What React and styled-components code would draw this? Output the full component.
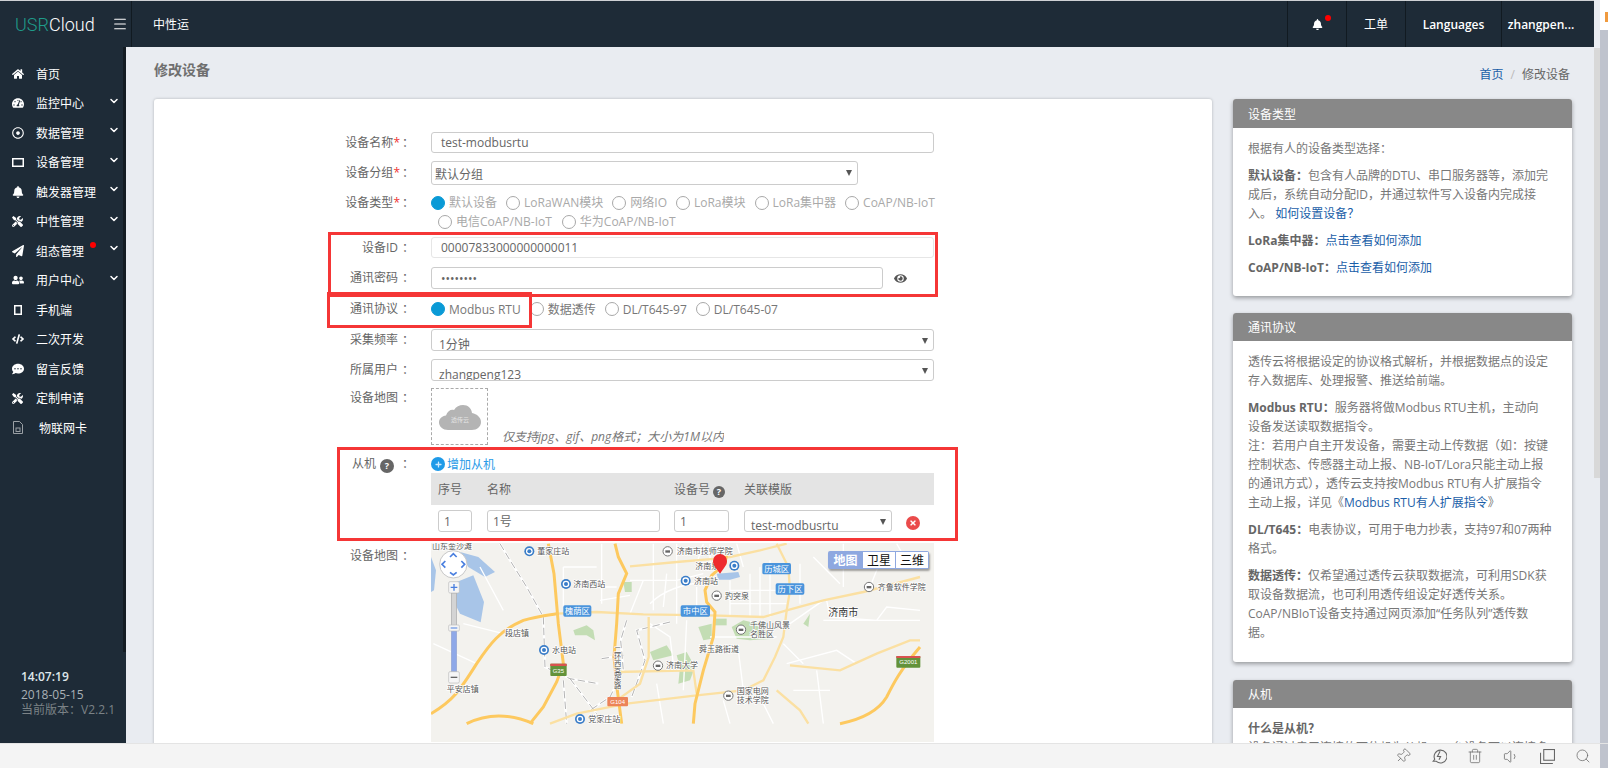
import React from "react";
import styled, { createGlobalStyle } from "styled-components";
import {
  FaHome,
  FaTachometerAlt,
  FaRegDotCircle,
  FaBell,
  FaTools,
  FaPaperPlane,
  FaUserFriends,
  FaCode,
  FaCommentDots,
  FaEye,
  FaTimes,
  FaPlus,
} from "react-icons/fa";
import { ChevronDown, Menu, Pin, Trash2, Volume1, Search } from "lucide-react";

const GlobalStyle = createGlobalStyle`
  html, body { margin: 0; padding: 0; height: 768px; overflow: hidden; background: #bfc3cd; }
  * { box-sizing: border-box; }
  body { font-family: "Open Sans", "Noto Sans CJK SC", sans-serif; font-size: 12px; color: #666; }
`;

const Page = styled.div`
  width: 1608px;
  height: 768px;
  display: flex;
  flex-direction: column;
`;

const Upper = styled.div`
  height: 743px;
  display: flex;
`;

const Shell = styled.div`
  width: 1594px;
  display: flex;
  flex-direction: column;
  border-top: 1px solid #cfd1d4;
`;

const ScrollTrack = styled.div`
  width: 6px;
  background: #e9ecf1;
`;

const ScrollThumb = styled.div`
  height: 430px;
  margin-top: 48px;
  background: #d8d8d8;
`;

const Strip = styled.div`
  width: 8px;
  background: #bfc3cd;
`;

const StripTop = styled.div`
  height: 30px;
  background: #fff;
  padding: 12px 0 0 5px;
`;

const StripMark = styled.div`
  width: 3px;
  height: 10px;
  background: #f09a3e;
`;

/* header */
const Header = styled.header`
  height: 46px;
  flex: none;
  display: flex;
  align-items: center;
  background: #1e2b37;
  color: #fff;
`;

const LogoBox = styled.div`
  width: 132px;
  height: 100%;
  display: flex;
  align-items: center;
  padding-left: 15px;
  border-right: 1px solid #111a21;
  svg { margin-left: 17px; }
`;

const Logo = styled.div`
  width: 80px;
  font-family: "Roboto", sans-serif;
  font-weight: 300;
  font-size: 18px;
  color: #fff;
  span { color: #1f9c8a; }
`;

const Brand = styled.div`
  margin-left: 21px;
  font-size: 12px;
  flex: 1;
`;

const HeadCell = styled.div`
  width: ${(p) => p.$w}px;
  height: 100%;
  display: flex;
  align-items: center;
  justify-content: center;
  border-left: 1px solid #111a21;
  padding-right: ${(p) => p.$pr || 0}px;
  font-size: 12px;
  font-weight: ${(p) => (p.$plain ? 400 : 600)};
  position: relative;
`;

const BellDot = styled.i`
  position: absolute;
  left: 37px;
  top: 14px;
  width: 6px;
  height: 6px;
  border-radius: 50%;
  background: #f00;
`;

/* body + sidebar */
const Body = styled.div`
  flex: 1;
  display: flex;
  min-height: 0;
`;

const Sidebar = styled.aside`
  width: 126px;
  flex: none;
  background: #1e2b37;
  color: #fff;
  display: flex;
  flex-direction: column;
  position: relative;
  &::after {
    content: "";
    position: absolute;
    left: 123px;
    top: 0;
    width: 3px;
    height: 605px;
    background: #141c23;
  }
`;

const Nav = styled.nav`
  padding-top: 12px;
`;

const NavItem = styled.div`
  height: 29.5px;
  display: flex;
  align-items: center;
  position: relative;
  padding-left: ${(p) => (p.$indent ? 39 : 36)}px;
  font-size: 12px;
`;

const NavIcon = styled.span`
  position: absolute;
  left: 11px;
  top: 0;
  width: 13px;
  height: 100%;
  display: flex;
  align-items: center;
  justify-content: center;
  svg { display: block; }
`;

const NavArrow = styled.span`
  position: absolute;
  left: 108px;
  top: 6px;
  svg { display: block; }
`;

const NavDot = styled.i`
  position: absolute;
  left: 90px;
  top: 6px;
  width: 6px;
  height: 6px;
  border-radius: 50%;
  background: #f00;
`;

const Clock = styled.div`
  margin-top: auto;
  padding: 0 0 26px 21px;
`;

const ClockTime = styled.div`
  font-size: 12px;
  line-height: 18px;
  font-weight: 600;
  color: #dfe6ea;
`;

const ClockDate = styled.div`
  font-size: 12px;
  line-height: 16px;
  margin-top: 1px;
  color: #aab1b6;
`;

const ClockVer = styled.div`
  font-size: 12px;
  line-height: 14px;
  color: #7b8286;
`;

/* content */
const Content = styled.main`
  flex: 1;
  min-width: 0;
  background: #e9ecf1;
  padding-left: 28px;
  overflow: hidden;
`;

const TitleBar = styled.div`
  height: 52px;
  display: flex;
  justify-content: space-between;
  padding-right: 24px;
`;

const Title = styled.h1`
  margin: 13px 0 0;
  font-size: 14px;
  line-height: 20px;
  font-weight: 700;
  color: #6f6f6f;
`;

const Crumbs = styled.div`
  margin-top: 19px;
  line-height: 18px;
  font-size: 12px;
  color: #666;
  a { color: #1a5ea8; }
  i { font-style: normal; color: #bbb; margin: 0 7px; }
`;

const Columns = styled.div`
  display: flex;
  gap: 21px;
`;

const Card = styled.section`
  width: 1058px;
  height: 680px;
  flex: none;
  background: #fff;
  border-radius: 3px 3px 0 0;
  box-shadow: 0 0 3px rgba(0, 0, 0, 0.25);
  padding-top: 33px;
  position: relative;
`;

const Annotation = styled.div`
  position: absolute;
  left: ${(p) => p.$l}px;
  top: ${(p) => p.$t}px;
  width: ${(p) => p.$w}px;
  height: ${(p) => p.$h}px;
  border: 3px solid #f53636;
  pointer-events: none;
`;

const Row = styled.div`
  display: flex;
  align-items: ${(p) => (p.$top ? "flex-start" : "center")};
  margin-top: ${(p) => p.$mt || 0}px;
  min-height: ${(p) => p.$h || 0}px;
`;

const Label = styled.label`
  width: 260px;
  flex: none;
  text-align: right;
  margin: ${(p) => p.$mt || 0}px 17px 0 0;
  font-size: 12px;
  line-height: 16px;
  color: #666;
  b { color: #e33; font-weight: 400; margin-right: 2px; }
`;

const Colon = styled.span`
  margin-left: 4px;
`;

const Input = styled.div`
  width: ${(p) => p.$w}px;
  height: ${(p) => p.$h}px;
  flex: none;
  border: 1px solid ${(p) => (p.$soft ? "#e6e6e6" : "#ccc")};
  border-radius: 3px;
  padding-left: ${(p) => p.$pl ?? 9}px;
  display: flex;
  align-items: center;
  font-size: 12px;
  color: #666;
  background: #fff;
`;

const Select = styled.div`
  width: ${(p) => p.$w}px;
  height: ${(p) => p.$h}px;
  flex: none;
  border: 1px solid #ccc;
  border-radius: 3px;
  padding: ${(p) => p.$pt ?? 6}px 0 0 ${(p) => p.$pl ?? 7}px;
  font-size: 12px;
  line-height: 18px;
  color: #666;
  background: #fff;
  overflow: hidden;
  position: relative;
  &::after {
    content: "";
    position: absolute;
    right: 5px;
    top: 8px;
    border-left: 3.5px solid transparent;
    border-right: 3.5px solid transparent;
    border-top: 6px solid #555;
  }
`;

const Radios = styled.div`
  display: flex;
  align-items: center;
  white-space: nowrap;
  padding-left: ${(p) => p.$pl || 0}px;
  gap: ${(p) => p.$gap || 7}px;
`;

const Radio = styled.span`
  display: inline-flex;
  align-items: center;
  gap: 4px;
  font-size: 12px;
  line-height: 19px;
  color: ${(p) => (p.$off ? "#a9a9a9" : "#777")};
  &::before {
    content: "";
    width: 12px;
    height: 12px;
    border-radius: 50%;
    border: 1px solid ${(p) => (p.$on ? "#0a9ad6" : "#a8a8a8")};
    background: ${(p) => (p.$on ? "#0a9ad6" : "#fff")};
  }
`;

const Eye = styled.span`
  margin-left: 11px;
  color: #555;
  svg { display: block; }
`;

const Upload = styled.div`
  width: 57px;
  height: 57px;
  flex: none;
  border: 1px dashed #aaa;
  display: flex;
  align-items: center;
  justify-content: center;
  padding-top: 2px;
`;

const Hint = styled.em`
  margin: 40px 0 0 14px;
  height: 17px;
  font-size: 12px;
  line-height: 18px;
  color: #777;
  overflow: hidden;
`;

const Help = styled.i`
  display: inline-flex;
  align-items: center;
  justify-content: center;
  width: ${(p) => p.$size || 12}px;
  height: ${(p) => p.$size || 12}px;
  margin: 0 ${(p) => p.$mr || 0}px 0 ${(p) => p.$ml || 0}px;
  border-radius: 50%;
  background: #666;
  color: #fff;
  font-size: 9px;
  font-style: normal;
  font-weight: 700;
  vertical-align: -1px;
`;

const SlaveBox = styled.div`
  width: 503px;
  flex: none;
`;

const AddSlave = styled.div`
  height: 18px;
  display: flex;
  align-items: center;
  gap: 2px;
  font-size: 12px;
  color: #2a9be8;
`;

const PlusDot = styled.span`
  width: 14px;
  height: 14px;
  border-radius: 50%;
  background: #1f9ae8;
  color: #cfeaff;
  display: flex;
  align-items: center;
  justify-content: center;
`;

const TableGrid = styled.div`
  display: grid;
  grid-template-columns: 49px 187px 70px 162px 1fr;
  padding-left: 7px;
  align-items: center;
`;

const TableHead = styled(TableGrid)`
  height: 32px;
  background: #e4e4e4;
  font-size: 12px;
  color: #666;
`;

const TableRow = styled(TableGrid)`
  height: 38px;
  padding-top: 5px;
  align-items: flex-start;
`;

const Remove = styled.span`
  width: 14px;
  height: 14px;
  margin-top: 6px;
  border-radius: 50%;
  background: #ea4b4b;
  color: #fff;
  display: flex;
  align-items: center;
  justify-content: center;
`;

const MapFrame = styled.div`
  width: 503px;
  height: 199px;
  flex: none;
  position: relative;
  overflow: hidden;
  background: #f3f2ee;
  svg { display: block; }
`;

const MapTypes = styled.div`
  position: absolute;
  left: 397px;
  top: 8px;
  display: flex;
  height: 18px;
  background: #8ea8e0;
  box-shadow: 1px 2px 2px rgba(0, 0, 0, 0.35);
  border-radius: 2px;
  padding: 1px;
`;

const MapType = styled.span`
  width: 33px;
  display: flex;
  align-items: center;
  justify-content: center;
  font-size: 12px;
  color: ${(p) => (p.$on ? "#fff" : "#111")};
  font-weight: ${(p) => (p.$on ? 700 : 400)};
  background: ${(p) => (p.$on ? "#8ea8e0" : "#fff")};
  border-left: ${(p) => (p.$on ? "0" : "1px solid #8ea8e0")};
`;

/* right column */
const Side = styled.div`
  width: 339px;
  flex: none;
  display: flex;
  flex-direction: column;
`;

const Panel = styled.section`
  flex: none;
  margin-bottom: ${(p) => p.$mb || 17}px;
  background: #fff;
  border-radius: 3px;
  box-shadow: 0 2px 4px rgba(0, 0, 0, 0.35);
`;

const PanelHead = styled.div`
  height: ${(p) => p.$h || 29}px;
  padding-left: 15px;
  display: flex;
  align-items: center;
  background: #888;
  border-radius: 3px 3px 0 0;
  color: #fff;
  font-size: 12px;
`;

const PanelBody = styled.div`
  padding: ${(p) => p.$pt || 11}px 15px ${(p) => p.$pb || 19}px;
  font-size: 12px;
  line-height: 19px;
  color: #777;
  white-space: nowrap;
  p { margin: 0 0 ${(p) => p.$gap ?? 8}px; }
  p:last-child { margin-bottom: 0; }
  b { color: #666; font-weight: 700; }
  a { color: #1a5ea8; }
`;

/* bottom bar */
const BottomBar = styled.footer`
  height: 25px;
  flex: none;
  display: flex;
  background: #f4f4f4;
  border-top: 1px solid #e4e4e4;
`;

const Tools = styled.div`
  width: 1600px;
  display: flex;
  justify-content: flex-end;
  align-items: center;
  gap: 20px;
  padding-right: 9px;
  color: #666;
  svg { display: block; }
`;

const TiltedPin = styled(Pin)`
  transform: rotate(45deg);
`;

const BarStrip = styled.div`
  width: 8px;
  background: #bfc3cd;
`;

const navItems = [
  { icon: <FaHome size={12} />, text: "首页" },
  { icon: <FaTachometerAlt size={12} />, text: "监控中心", more: true },
  { icon: <FaRegDotCircle size={12} />, text: "数据管理", more: true },
  { icon: <TabletIcon />, text: "设备管理", more: true },
  { icon: <FaBell size={12} />, text: "触发器管理", more: true },
  { icon: <FaTools size={11} />, text: "中性管理", more: true },
  { icon: <FaPaperPlane size={12} />, text: "组态管理", more: true, dot: true },
  { icon: <FaUserFriends size={12} />, text: "用户中心", more: true },
  { icon: <PhoneIcon />, text: "手机端" },
  { icon: <FaCode size={12} />, text: "二次开发" },
  { icon: <FaCommentDots size={12} />, text: "留言反馈" },
  { icon: <FaTools size={11} />, text: "定制申请" },
  { icon: <SimIcon />, text: "物联网卡", indent: true },
];

function TabletIcon() {
  return (
    <svg width="12" height="9" viewBox="0 0 12 9">
      <rect x="0.75" y="0.75" width="10.5" height="7.5" fill="none" stroke="#fff" strokeWidth="1.5" />
    </svg>
  );
}

function PhoneIcon() {
  return (
    <svg width="8" height="10" viewBox="0 0 8 10">
      <rect x="0.75" y="0.75" width="6.5" height="8.5" fill="none" stroke="#fff" strokeWidth="1.5" />
    </svg>
  );
}

function SimIcon() {
  return (
    <svg width="10" height="13" viewBox="0 0 10 13" fill="none" stroke="#9aa0a5">
      <path d="M.5.5H6.5L9.5 3.5V12.5H.5Z" />
      <rect x="3" y="7" width="4" height="3.5" />
    </svg>
  );
}

function CloudMark() {
  return (
    <svg width="42" height="26" viewBox="0 0 42 26">
      <path
        d="M9 25C4 25 0 21.500 0 17.500 0 13.500 3 11 7 10.500 8.500 6 12 4 15 5 17 1.500 20.500 0 24 0c5 0 8.500 3.500 9 8 5 1 9 4.500 9 9 0 4.500-4 8-9 8Z"
        fill="#b4b4b4"
      />
      <text x="21" y="17" textAnchor="middle" fontSize="6" fill="#e4e4e4" fontFamily="Noto Sans CJK SC, sans-serif">
        透传云
      </text>
    </svg>
  );
}

const MAP_WHITE =
  "M460 130H560M575 60V240M460 130V250M660 170H800L880 150M730 60V260M800 60V300M720 240C760 200 820 180 890 175M960 170V280M1020 150V280M1080 110V280M960 200H1140M960 240H1130M830 290L820 500M900 340H1100M985 380L1000 500M1140 300L1240 230M1250 230L1260 280 1400 290 1430 250 1530 260M1240 290H1530M1130 420L1280 380 1340 420M700 170L660 270M980 60L1000 130M1120 360L1180 420M1380 190L1420 90M1460 60L1500 130M880 60L860 120M560 190H620M570 230L660 215M770 150L760 250M860 190V280M900 60V140M1050 130V280M1170 120V240M1210 100L1290 180M1300 60V190M720 300L780 340 790 420M1150 500H1260M1220 440L1240 600M740 480L760 600M940 530L960 600M1060 540L1090 600M210 130L280 260M160 300L280 330M70 360L200 420";
const MAP_RAIL =
  "M270 60L300 110 350 190 400 280 405 430 480 465 565 480M460 470L470 600M650 290L632 350 640 440 600 520 540 560M780 295L680 320 705 410 665 520M575 405L640 395M480 465L560 570";
const MAP_ROAD_MAIN = [
  "M415 60L432 150 445 300 460 420 440 475 400 550 360 600",
  "M615 60L625 100 650 150 625 210 620 300 612 400 622 500 635 600",
  "M950 90L945 120 905 155 885 200 890 235 915 265 910 340 880 440 855 540 850 600",
  "M63 570C130 530 150 500 200 420 240 360 270 320 340 290 380 278 410 275 440 270",
  "M170 600C230 570 300 570 370 600",
  "M1290 600C1340 590 1400 570 1430 520 1450 480 1470 440 1530 370",
];
const MAP_ROAD_LIGHT = [
  "M440 270L560 265 700 272 900 275 1060 280 1130 260 1240 230 1360 205 1530 160",
  "M660 128L800 115 920 105 960 100 1050 80 1130 60",
  "M1100 60L1135 130 1140 200 1130 260 1120 340 1095 400 1060 470 1000 500 860 515 650 540 500 570 420 600",
  "M1140 425L1290 440 1400 390 1500 350 1530 350",
  "M1100 500L1170 560 1195 600",
  "M620 445L850 440 860 510",
  "M716 280V400L690 480 620 530",
];
const MAP_GREEN = [
  "M490 320L530 305 550 320 555 350 530 335 495 335Z",
  "M640 175H665V205H645Z",
  "M720 385L770 365 790 395 730 410Z",
  "M800 395L830 385 855 430 840 470 805 480 810 430Z",
  "M865 310L905 300 905 345 880 350Z",
  "M915 285H950V305H915Z",
  "M965 310L1000 290 1045 300 1090 345 1020 350 980 345Z",
  "M1180 300L1200 270 1195 310Z",
];
const MAP_WATER = [
  "M140 175L190 155 222 235 212 296 150 270 125 220Z",
  "M150 85L205 100 255 145 225 160 175 130Z",
  "M63 100L78 140 72 200 63 205Z",
  "M920 150L985 145 990 160 960 168 925 168Z",
];
const MAP_TEXTS = [
  ["董家庄站", 382, 92],
  ["济南市技师学院", 800, 90],
  ["济南西站", 490, 190],
  ["济南站", 852, 180],
  ["济南泉", 856, 136],
  ["趵突泉", 945, 227],
  ["齐鲁软件学院", 1403, 199],
  ["段店镇", 285, 338],
  ["水电站", 426, 389],
  ["千佛山风景", 1020, 314],
  ["名胜区", 1020, 341],
  ["舜玉路街道", 867, 384],
  ["济南大学", 768, 434],
  ["国家电网", 980, 512],
  ["技术学院", 980, 538],
  ["党家庄站", 535, 596],
  ["平安店镇", 110, 505],
  ["山东金沙滩", 66, 76],
];
const MAP_BADGES = [
  ["槐荫区", 460, 245, 84],
  ["市中区", 812, 245, 88],
  ["历城区", 1057, 118, 86],
  ["历下区", 1097, 179, 86],
];
const MAP_METRO = [
  [358, 83],
  [468, 181],
  [827, 171],
  [973, 126],
  [402, 379],
  [510, 586],
];
const MAP_POI = [
  [773, 83],
  [920, 216],
  [1377, 190],
  [993, 318],
  [744, 426],
  [955, 516],
];

function CityMap() {
  return (
    <svg width="503" height="199" viewBox="63 58 1509 597">
      <rect x="63" y="58" width="1509" height="597" fill="#f3f2ee" />
      {MAP_WATER.map((d) => (
        <path key={d} d={d} fill="#a8c5e8" />
      ))}
      {MAP_GREEN.map((d) => (
        <path key={d} d={d} fill="#c3ddb4" />
      ))}
      <path d={MAP_WHITE} fill="none" stroke="#fff" strokeWidth="4" />
      <path d={MAP_RAIL} fill="none" stroke="#fff" strokeWidth="7" />
      <path d={MAP_RAIL} fill="none" stroke="#b4b4b4" strokeWidth="3" strokeDasharray="22 10" />
      {MAP_ROAD_LIGHT.map((d) => (
        <path key={d} d={d} fill="none" stroke="#fbe0a2" strokeWidth="7" />
      ))}
      {MAP_ROAD_MAIN.map((d) => (
        <path key={d} d={d} fill="none" stroke="#fdc95f" strokeWidth="9" />
      ))}
      <g fontFamily="Noto Sans CJK SC, sans-serif" fontSize="24" fill="#555">
        {MAP_TEXTS.map(([t, x, y]) => (
          <text key={t} x={x} y={y} stroke="#fff" strokeWidth="4" paintOrder="stroke">
            {t}
          </text>
        ))}
        <text x="1255" y="278" fontSize="30" fill="#333" stroke="#fff" strokeWidth="4" paintOrder="stroke">
          济南市
        </text>
        <text x="623" y="365" fontSize="22" fill="#555" writingMode="tb" stroke="#fff" strokeWidth="3" paintOrder="stroke">
          二环西高架路
        </text>
      </g>
      {MAP_METRO.map(([x, y]) => (
        <g key={x}>
          <circle cx={x} cy={y} r="15" fill="#3a7dc8" />
          <circle cx={x} cy={y} r="10" fill="#fff" />
          <circle cx={x} cy={y} r="6" fill="#3a7dc8" />
        </g>
      ))}
      {MAP_POI.map(([x, y]) => (
        <g key={x}>
          <circle cx={x} cy={y} r="14" fill="#fff" stroke="#777" strokeWidth="3" />
          <rect x={x - 7} y={y - 3} width="14" height="7" fill="#666" />
        </g>
      ))}
      {MAP_BADGES.map(([t, x, y, w]) => (
        <g key={t}>
          <rect x={x} y={y} width={w} height="34" rx="5" fill="#4a94dc" />
          <text
            x={x + w / 2}
            y={y + 26}
            textAnchor="middle"
            fontSize="25"
            fill="#fff"
            fontFamily="Noto Sans CJK SC, sans-serif"
          >
            {t}
          </text>
        </g>
      ))}
      <g fontFamily="Liberation Sans, sans-serif" fontSize="18" fill="#fff" textAnchor="middle">
        <rect x="421" y="420" width="49" height="37" rx="3" fill="#62923a" />
        <rect x="421" y="420" width="49" height="7" fill="#d9534f" />
        <text x="445" y="447">G35</text>
        <rect x="592" y="520" width="62" height="28" rx="3" fill="#ec8358" />
        <text x="623" y="541">G104</text>
        <rect x="1459" y="397" width="72" height="35" rx="3" fill="#62923a" />
        <rect x="1459" y="397" width="72" height="6" fill="#d9534f" />
        <text x="1495" y="421">G2001</text>
      </g>
      <path d="M930 150C915 130 909 122 909 112A21 21 0 0 1 951 112C951 122 945 130 930 150Z" fill="#ee2a2e" />
      {/* zoom and pan control */}
      <circle cx="130" cy="122" r="41" fill="#fff" stroke="#c8c8c8" strokeWidth="3" />
      <path
        d="M120 100L130 90 140 100M120 146L130 154 140 146M106 112L96 122 106 132M154 112L164 122 154 132"
        fill="none"
        stroke="#4a7fdf"
        strokeWidth="5"
      />
      <rect x="124" y="208" width="16" height="236" fill="#d4d4d4" stroke="#aaa" strokeWidth="2" />
      <rect x="124" y="320" width="16" height="124" fill="#8ea8e8" />
      <rect x="116" y="174" width="32" height="34" rx="4" fill="#f6f6f6" stroke="#bbb" strokeWidth="2" />
      <path d="M132 181V201M122 191H142" stroke="#4a7fdf" strokeWidth="4" />
      <rect x="116" y="304" width="32" height="18" rx="3" fill="#f6f6f6" stroke="#bbb" strokeWidth="2" />
      <path d="M122 313H142" stroke="#4a7fdf" strokeWidth="3" />
      <rect x="116" y="444" width="32" height="34" rx="4" fill="#f6f6f6" stroke="#bbb" strokeWidth="2" />
      <path d="M122 461H142" stroke="#666" strokeWidth="4" />
    </svg>
  );
}

function BoltClock() {
  return (
    <svg width="16" height="16" viewBox="0 0 15 15" fill="none" stroke="currentColor">
      <path d="M2 12.500L3.500 10.500A6 6 0 1 1 5 12.500Z" />
      <path d="M8.500 3L6 8H9L7.500 11" />
    </svg>
  );
}

function TwoSquares() {
  return (
    <svg width="15" height="15" viewBox="0 0 14 14" fill="none" stroke="currentColor">
      <rect x="3.500" y="0.500" width="10" height="10" />
      <path d="M0.500 3.500V13.500H12" />
    </svg>
  );
}

const App = () => {
  return (
    <Page>
      <GlobalStyle />
      <Upper>
        <Shell>
          <Header>
            <LogoBox>
              <Logo>
                <span>USR</span>Cloud
              </Logo>
              <Menu size={16} strokeWidth={1.6} color="#fff" />
            </LogoBox>
            <Brand>中性运</Brand>
            <HeadCell $w={59}>
              <FaBell size={11} />
              <BellDot />
            </HeadCell>
            <HeadCell $w={59} $plain>工单</HeadCell>
            <HeadCell $w={96}>Languages</HeadCell>
            <HeadCell $w={93} $pr={14}>zhangpen...</HeadCell>
          </Header>
          <Body>
            <Sidebar>
              <Nav>
                {navItems.map((item) => (
                  <NavItem key={item.text} $indent={item.indent}>
                    <NavIcon>{item.icon}</NavIcon>
                    {item.text}
                    {item.more && (
                      <NavArrow>
                        <ChevronDown size={12} strokeWidth={3} />
                      </NavArrow>
                    )}
                    {item.dot && <NavDot />}
                  </NavItem>
                ))}
              </Nav>
              <Clock>
                <ClockTime>14:07:19</ClockTime>
                <ClockDate>2018-05-15</ClockDate>
                <ClockVer>当前版本：V2.2.1</ClockVer>
              </Clock>
            </Sidebar>
            <Content>
              <TitleBar>
                <Title>修改设备</Title>
                <Crumbs>
                  <a>首页</a>
                  <i>/</i>修改设备
                </Crumbs>
              </TitleBar>
              <Columns>
                <Card>
                  <Row $h={21}>
                    <Label>
                      设备名称<b>*</b>：
                    </Label>
                    <Input $w={503} $h={21}>test-modbusrtu</Input>
                  </Row>
                  <Row $h={24} $mt={8}>
                    <Label>
                      设备分组<b>*</b>：
                    </Label>
                    <Select $w={427} $h={24} $pt={4} $pl={3}>默认分组</Select>
                  </Row>
                  <Row $h={19} $mt={8}>
                    <Label>
                      设备类型<b>*</b>：
                    </Label>
                    <Radios $gap={9}>
                      <Radio $on $off>默认设备</Radio>
                      <Radio $off>LoRaWAN模块</Radio>
                      <Radio $off>网络IO</Radio>
                      <Radio $off>LoRa模块</Radio>
                      <Radio $off>LoRa集中器</Radio>
                      <Radio $off>CoAP/NB-IoT</Radio>
                    </Radios>
                  </Row>
                  <Row $h={19}>
                    <Label />
                    <Radios $pl={7} $gap={10}>
                      <Radio $off>电信CoAP/NB-IoT</Radio>
                      <Radio $off>华为CoAP/NB-IoT</Radio>
                    </Radios>
                  </Row>
                  <Row $h={21} $mt={6}>
                    <Label $mt={1}>
                      设备ID<Colon>：</Colon>
                    </Label>
                    <Input $w={503} $h={21} $soft>00007833000000000011</Input>
                  </Row>
                  <Row $h={22} $mt={9}>
                    <Label>
                      通讯密码<Colon>：</Colon>
                    </Label>
                    <Input $w={452} $h={22}>••••••••</Input>
                    <Eye>
                      <FaEye size={13} />
                    </Eye>
                  </Row>
                  <Row $h={20} $mt={10}>
                    <Label>
                      通讯协议<Colon>：</Colon>
                    </Label>
                    <Radios $gap={9}>
                      <Radio $on>Modbus RTU</Radio>
                      <Radio>数据透传</Radio>
                      <Radio>DL/T645-97</Radio>
                      <Radio>DL/T645-07</Radio>
                    </Radios>
                  </Row>
                  <Row $h={22} $mt={10}>
                    <Label>
                      采集频率<Colon>：</Colon>
                    </Label>
                    <Select $w={503} $h={22}>1分钟</Select>
                  </Row>
                  <Row $h={22} $mt={8}>
                    <Label>
                      所属用户<Colon>：</Colon>
                    </Label>
                    <Select $w={503} $h={22}>zhangpeng123</Select>
                  </Row>
                  <Row $top $h={57} $mt={7}>
                    <Label $mt={2}>
                      设备地图<Colon>：</Colon>
                    </Label>
                    <Upload>
                      <CloudMark />
                    </Upload>
                    <Hint>仅支持jpg、gif、png格式；大小为1M以内</Hint>
                  </Row>
                  <Row $top $mt={10}>
                    <Label $mt={1}>
                      从机
                      <Help $ml={4} $mr={4} $size={14}>?</Help>
                      <Colon>：</Colon>
                    </Label>
                    <SlaveBox>
                      <AddSlave>
                        <PlusDot>
                          <FaPlus size={7} />
                        </PlusDot>
                        增加从机
                      </AddSlave>
                      <TableHead>
                        <span>序号</span>
                        <span>名称</span>
                        <span>
                          设备号<Help $ml={3}>?</Help>
                        </span>
                        <span>关联模版</span>
                      </TableHead>
                      <TableRow>
                        <Input $w={34} $h={22} $pl={5}>1</Input>
                        <Input $w={173} $h={22} $pl={5}>1号</Input>
                        <Input $w={55} $h={22} $pl={5}>1</Input>
                        <Select $w={148} $h={22} $pl={6}>test-modbusrtu</Select>
                        <Remove>
                          <FaTimes size={8} />
                        </Remove>
                      </TableRow>
                    </SlaveBox>
                  </Row>
                  <Row $top>
                    <Label $mt={5}>
                      设备地图<Colon>：</Colon>
                    </Label>
                    <MapFrame>
                      <CityMap />
                      <MapTypes>
                        <MapType $on>地图</MapType>
                        <MapType>卫星</MapType>
                        <MapType>三维</MapType>
                      </MapTypes>
                    </MapFrame>
                  </Row>
                  <Annotation $l={174} $t={133} $w={610} $h={65} />
                  <Annotation $l={173} $t={193} $w={205} $h={36} />
                  <Annotation $l={183} $t={348} $w={621} $h={94} />
                </Card>
                <Side>
                  <Panel>
                    <PanelHead>设备类型</PanelHead>
                    <PanelBody>
                      <p>根据有人的设备类型选择：</p>
                      <p>
                        <b>默认设备：</b>包含有人品牌的DTU、串口服务器等，添加完
                        <br />
                        成后，系统自动分配ID，并通过软件写入设备内完成接
                        <br />
                        入。 <a>如何设置设备？</a>
                      </p>
                      <p>
                        <b>LoRa集中器：</b>
                        <a>点击查看如何添加</a>
                      </p>
                      <p>
                        <b>CoAP/NB-IoT：</b>
                        <a>点击查看如何添加</a>
                      </p>
                    </PanelBody>
                  </Panel>
                  <Panel $mb={18}>
                    <PanelHead $h={28}>通讯协议</PanelHead>
                    <PanelBody $pb={20}>
                      <p>
                        透传云将根据设定的协议格式解析，并根据数据点的设定
                        <br />
                        存入数据库、处理报警、推送给前端。
                      </p>
                      <p>
                        <b>Modbus RTU：</b>服务器将做Modbus RTU主机，主动向
                        <br />
                        设备发送读取数据指令。
                        <br />
                        注：若用户自主开发设备，需要主动上传数据（如：按键
                        <br />
                        控制状态、传感器主动上报、NB-IoT/Lora只能主动上报
                        <br />
                        的通讯方式），透传云支持按Modbus RTU有人扩展指令
                        <br />
                        主动上报，详见《<a>Modbus RTU有人扩展指令</a>》
                      </p>
                      <p>
                        <b>DL/T645：</b>电表协议，可用于电力抄表，支持97和07两种
                        <br />
                        格式。
                      </p>
                      <p>
                        <b>数据透传：</b>仅希望通过透传云获取数据流，可利用SDK获
                        <br />
                        取设备数据流，也可利用透传组设定好透传关系。
                        <br />
                        CoAP/NBIoT设备支持通过网页添加“任务队列”透传数
                        <br />
                        据。
                      </p>
                    </PanelBody>
                  </Panel>
                  <Panel>
                    <PanelHead $h={28}>从机</PanelHead>
                    <PanelBody $pt={11} $gap={0}>
                      <p>
                        <b>什么是从机？</b>
                      </p>
                      <p>设备通过串口连接的下位机为从机，一台设备可以连接多</p>
                    </PanelBody>
                  </Panel>
                </Side>
              </Columns>
            </Content>
          </Body>
        </Shell>
        <ScrollTrack>
          <ScrollThumb />
        </ScrollTrack>
        <Strip>
          <StripTop>
            <StripMark />
          </StripTop>
        </Strip>
      </Upper>
      <BottomBar>
        <Tools>
          <TiltedPin size={16} strokeWidth={1.1} />
          <BoltClock />
          <Trash2 size={16} strokeWidth={1.1} />
          <Volume1 size={17} strokeWidth={1.1} />
          <TwoSquares />
          <Search size={16} strokeWidth={1.1} />
        </Tools>
        <BarStrip />
      </BottomBar>
    </Page>
  );
};

export default App;
